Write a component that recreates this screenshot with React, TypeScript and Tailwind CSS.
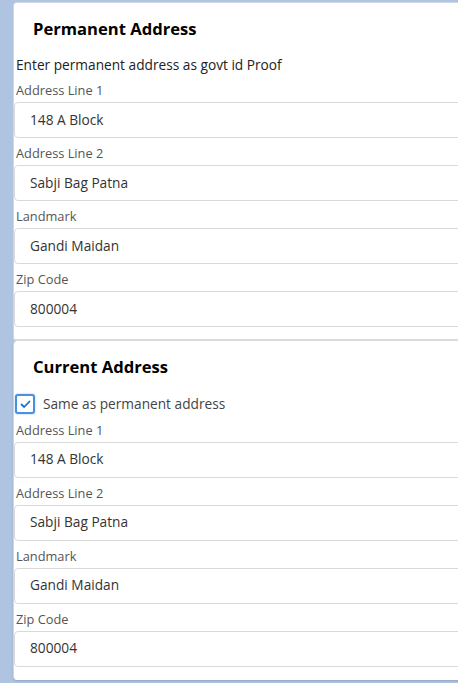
import React from 'react';

const fields = [
    { label: "Address Line 1", value: "148 A Block" },
    { label: "Address Line 2", value: "Sabji Bag Patna" },
    { label: "Landmark", value: "Gandi Maidan" },
    { label: "Zip Code", value: "800004" }
];

const Field = ({ label, value }: { label: string; value: string }) => (
    <div className="flex flex-col">
        <label className="text-[12.8px] text-[#555] leading-[18px] pl-[2px] pt-[6px] pb-[3px]">{label}</label>
        <div className="h-[36px] border border-[#d9d9d9] rounded-[4px] bg-white flex items-center pl-[15px] text-[13.7px] text-[#333] w-[460px]">
            {value}
        </div>
    </div>
);

export default function App() {
    return (
        <div
            className="min-h-[683px] w-[458px] overflow-hidden bg-[#afc4e0] pt-[2px] pl-[13px]"
            style={{ fontFamily: '"Open Sans", sans-serif' }}
        >
            <div className="w-[460px] bg-white rounded-[4px] border-l border-t border-[#d0d7e2] border-b-2 border-b-[#dcdcdc] pb-[12px]">
                <h2 className="text-[16.6px] font-bold text-black pl-[19px] pt-[14px] leading-[24px]">Permanent Address</h2>
                <p className="text-[13.7px] text-[#222] pl-[2px] mt-[14px] leading-[20px]">Enter permanent address as govt id Proof</p>
                <div>
                    {fields.map((f, i) => (
                        <Field key={i} label={f.label} value={f.value} />
                    ))}
                </div>
            </div>

            <div className="w-[460px] bg-white rounded-[4px] border-l border-[#d0d7e2] pb-[13px] shadow-[0_1px_2px_rgba(0,0,0,0.15)]">
                <h2 className="text-[16.6px] font-bold text-black pl-[19px] pt-[14px] leading-[24px]">Current Address</h2>
                <label className="flex items-center gap-[8px] mt-[15px] pl-[1px]">
                    <span className="w-[20px] h-[20px] rounded-[3px] border-2 border-[#4a90e2] shadow-[0_0_2px_rgba(74,144,226,0.6)] flex items-center justify-center bg-white">
                        <svg width="11" height="9" viewBox="0 0 11 9" fill="none">
                            <path d="M1.5 4.5 L4.2 7 L9.5 1.5" stroke="#1a6fd0" strokeWidth="1.8" strokeLinecap="round" strokeLinejoin="round" />
                        </svg>
                    </span>
                    <span className="text-[13.7px] text-[#444]">Same as permanent address</span>
                </label>
                <div>
                    {fields.map((f, i) => (
                        <Field key={i} label={f.label} value={f.value} />
                    ))}
                </div>
            </div>
        </div>
    );
}
